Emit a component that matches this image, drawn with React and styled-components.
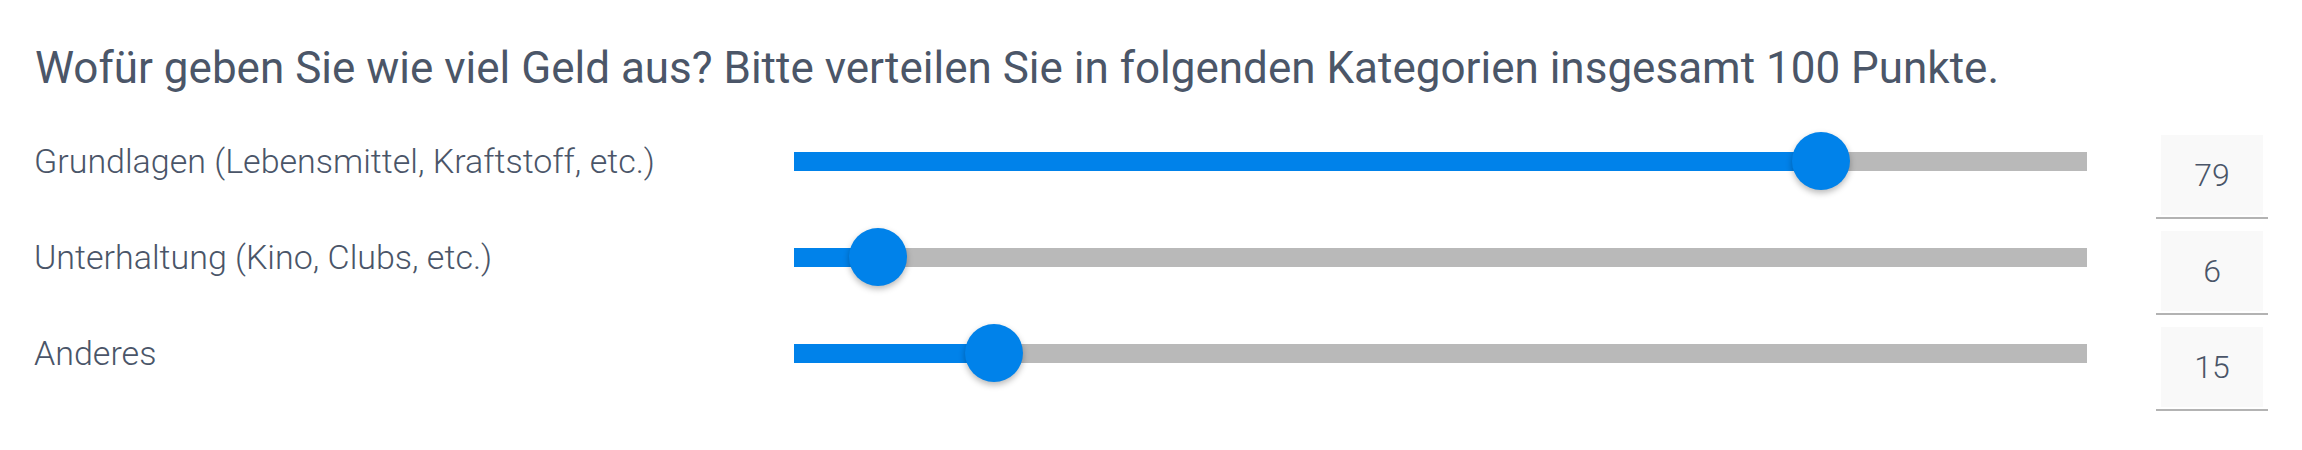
import React from 'react';
import styled, { createGlobalStyle } from 'styled-components';

const GlobalStyle = createGlobalStyle`
  html, body {
    margin: 0;
    padding: 0;
    background: #ffffff;
  }
  body {
    font-family: Roboto, "Liberation Sans", sans-serif;
    color: #4a5568;
  }
`;

const items = [
  { label: 'Grundlagen (Lebensmittel, Kraftstoff, etc.)', value: 79 },
  { label: 'Unterhaltung (Kino, Clubs, etc.)', value: 6 },
  { label: 'Anderes', value: 15 },
];

const App = () => {
  return (
    <>
      <GlobalStyle />
      <Page>
        <Question>
          Wofür geben Sie wie viel Geld aus? Bitte verteilen Sie in folgenden Kategorien insgesamt 100 Punkte.
        </Question>
        <List>
          {items.map((item) => (
            <Row key={item.label}>
              <Label>{item.label}</Label>
              <SliderCell>
                <Track>
                  <Fill style={{ width: `calc(${item.value}% + 6px)` }} />
                  <Thumb style={{ left: `calc(${item.value}% + 6px)` }} />
                </Track>
              </SliderCell>
              <ValueField>
                <ValueBox>{item.value}</ValueBox>
              </ValueField>
            </Row>
          ))}
        </List>
      </Page>
    </>
  );
};

const Page = styled.div`
  padding: 42px 34px 0 34px;
`;

const Question = styled.h1`
  margin: 0 0 41px 1px;
  font-size: 44px;
  line-height: 52px;
  font-weight: 400;
  color: #4b5668;
`;

const List = styled.div`
  display: flex;
  flex-direction: column;
  gap: 12px;
`;

const Row = styled.div`
  display: grid;
  grid-template-columns: 760px 1293px 69px 112px;
  align-items: start;
`;

const Label = styled.div`
  height: 52px;
  line-height: 52px;
  font-size: 34px;
  font-weight: 300;
  white-space: nowrap;
`;

const SliderCell = styled.div`
  grid-column: 2;
  height: 52px;
  display: flex;
  align-items: center;
`;

const Track = styled.div`
  position: relative;
  width: 100%;
  height: 19px;
  background: #b9b9b9;
`;

const Fill = styled.div`
  height: 100%;
  background: #0082ea;
`;

const Thumb = styled.div`
  position: absolute;
  top: 50%;
  width: 58px;
  height: 58px;
  border-radius: 50%;
  background: #0082ea;
  transform: translate(-50%, -50%);
  box-shadow: 0 3px 6px rgba(0, 0, 0, 0.28);
`;

const ValueField = styled.div`
  grid-column: 4;
  padding: 0 5px 2px;
  border-bottom: 2px solid #b3b3b3;
`;

const ValueBox = styled.div`
  height: 80px;
  display: flex;
  align-items: center;
  justify-content: center;
  background: #f9f9f9;
  font-size: 32px;
  font-weight: 300;
  line-height: 1;
`;

export default App;
